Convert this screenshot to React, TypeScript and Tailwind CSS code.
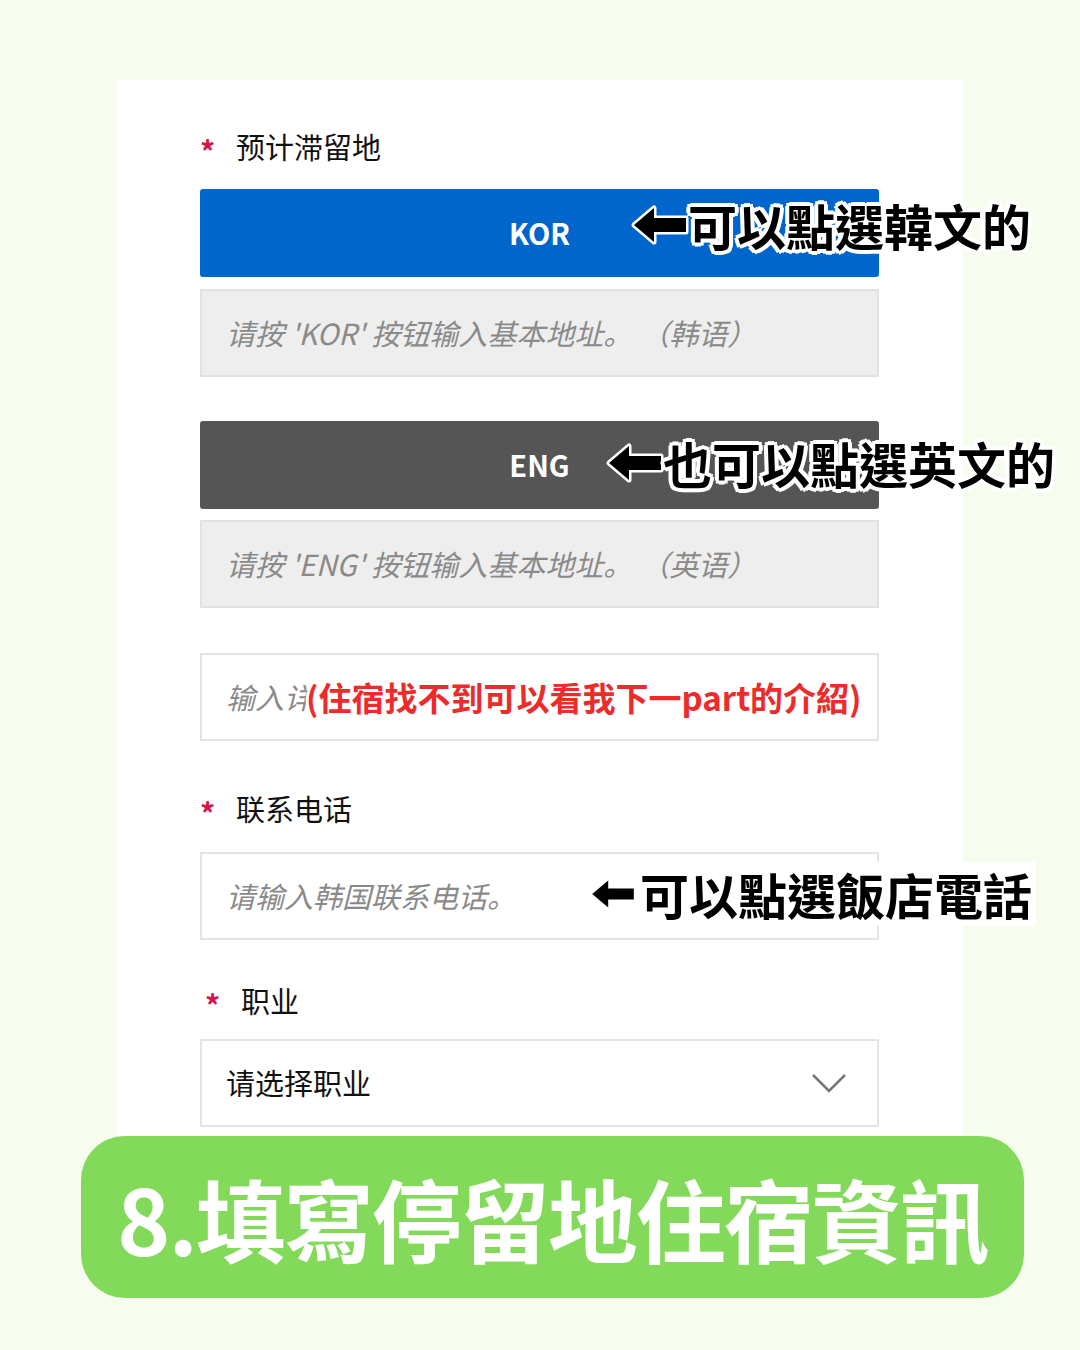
import React from 'react';

const font = 'font-["Noto_Sans_CJK_SC","Noto_Sans",sans-serif]';
const fontTC = 'font-["Noto_Sans_CJK_TC","Noto_Sans",sans-serif]';
const outline =
    '[text-shadow:4px_0_0_#fff,-4px_0_0_#fff,0_4px_0_#fff,0_-4px_0_#fff,3px_3px_0_#fff,-3px_-3px_0_#fff,3px_-3px_0_#fff,-3px_3px_0_#fff]';

function Arrow({ w = 56, h = 40 }: { w?: number; h?: number }) {
    return (
        <svg width={w} height={h} viewBox="0 0 56 40" className="shrink-0 overflow-visible">
            <path
                d="M2 20 L22 3 L22 13 L54 13 L54 27 L22 27 L22 37 Z"
                fill="#000"
                stroke="#fff"
                strokeWidth="5"
                strokeLinejoin="round"
                style={{ paintOrder: 'stroke' }}
            />
        </svg>
    );
}

function Label({ text, shift = false }: { text: string; shift?: boolean }) {
    return (
        <div className={`flex items-center h-10 text-[29px] text-[#111] ${shift ? 'pl-[5px]' : ''}`}>
            <span className="text-[#d0174e] text-[30px] font-bold w-9 pt-[6px]">*</span>
            <span>{text}</span>
        </div>
    );
}

function Field({ placeholder, note, gray = false, children }: { placeholder: string; note?: string; gray?: boolean; children?: React.ReactNode }) {
    return (
        <div
            className={`relative h-[88px] border-2 flex items-center pl-[24px] ${
                gray ? 'bg-[#eeeeee] border-[#e2e2e2]' : 'bg-white border-[#e4e4e4]'
            }`}
        >
            <span className="italic text-[29px] text-[#8a8a8a]">{placeholder}</span>
            {note && <span className="italic text-[29px] text-[#8a8a8a] ml-[8px]">{note}</span>}
            {children}
        </div>
    );
}

export default function App() {
    return (
        <div className={`min-h-[1350px] w-[1080px] bg-[#f6fdee] pt-20 ${font}`}>
            {/* Form card */}
            <div className="ml-[117px] w-[846px] bg-white pt-[47px] pb-[9px] pl-[83px] pr-[84px]">
                <Label text="预计滞留地" />

                <div className="relative mt-[22px] h-[88px] bg-[#0066cc] rounded-[3px] flex items-center justify-center text-white text-[29px] font-bold">
                    KOR
                    <div className={`absolute left-[432px] top-[4px] flex items-center whitespace-nowrap text-black text-[49px] font-bold leading-[64px] ${fontTC} ${outline}`}>
                        <Arrow />
                        <span>可以點選韓文的</span>
                    </div>
                </div>
                <div className="mt-3">
                    <Field gray placeholder="请按 'KOR' 按钮输入基本地址。" note="（韩语）" />
                </div>

                <div className="relative mt-[44px] h-[88px] bg-[#555555] rounded-[3px] flex items-center justify-center text-white text-[29px] font-bold">
                    ENG
                    <div className={`absolute left-[407px] top-[10px] flex items-center whitespace-nowrap text-black text-[49px] font-bold leading-[64px] ${fontTC} ${outline}`}>
                        <Arrow />
                        <span>也可以點選英文的</span>
                    </div>
                </div>
                <div className="mt-[11px]">
                    <Field gray placeholder="请按 'ENG' 按钮输入基本地址。" note="（英语）" />
                </div>

                <div className="mt-[45px]">
                    <Field placeholder="输入详">
                        <div className={`absolute left-[104px] top-[20px] whitespace-nowrap text-[#ee2b2b] text-[33px] font-bold leading-[44px] ${fontTC} [text-shadow:3px_0_0_#fff,-3px_0_0_#fff,0_3px_0_#fff,0_-3px_0_#fff]`}>
                            (住宿找不到可以看我下一part的介紹)
                        </div>
                    </Field>
                </div>

                <div className="mt-[48px]">
                    <Label text="联系电话" />
                </div>
                <div className="mt-[23px]">
                    <Field placeholder="请输入韩国联系电话。">
                        <div className={`absolute left-[388px] top-[8px] flex items-center gap-1 whitespace-nowrap bg-white pr-1 text-black text-[49px] font-bold leading-[64px] ${fontTC}`}>
                            <Arrow w={46} h={32} />
                            <span>可以點選飯店電話</span>
                        </div>
                    </Field>
                </div>

                <div className="mt-[41px]">
                    <Label text="职业" shift />
                </div>
                <div className="mt-[18px] h-[88px] border-2 border-[#e4e4e4] bg-white flex items-center justify-between pl-6 pr-[30px]">
                    <span className="text-[29px] text-[#111]">请选择职业</span>
                    <svg width="36" height="20" viewBox="0 0 36 20">
                        <polyline points="2,2 18,18 34,2" fill="none" stroke="#777" strokeWidth="2.5" />
                    </svg>
                </div>
            </div>

            {/* Step banner */}
            <div className={`ml-[81px] w-[943px] h-[162px] rounded-[44px] bg-[#83da5a] flex items-center justify-center text-white text-[90px] font-bold leading-none tracking-[-2px] ${fontTC}`}>
                8.填寫停留地住宿資訊
            </div>
        </div>
    );
}
